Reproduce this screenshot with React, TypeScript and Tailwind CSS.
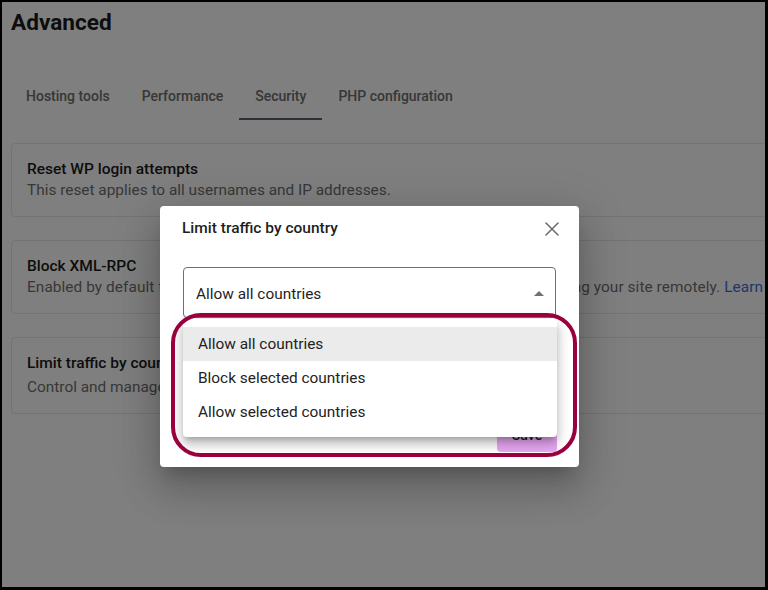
import React from "react";

const tabs = ["Hosting tools", "Performance", "Security", "PHP configuration"];

function Card({
  title,
  children,
  pt,
  pb,
  gap,
}: {
  title: string;
  children: React.ReactNode;
  pt: string;
  pb: string;
  gap: string;
}) {
  return (
    <div className={`w-[820px] border border-[#e6e6e6] rounded-[4px] px-[15px] ${pt} ${pb}`}>
      <div className="text-[15.5px] leading-[20px] font-medium text-[#1a1a1a]">{title}</div>
      <div className={`text-[15.4px] leading-[22px] text-[#6f6f6f] whitespace-nowrap ${gap}`}>{children}</div>
    </div>
  );
}

export default function App() {
  return (
    <div className="w-[768px] h-[590px] bg-black pt-[2px] pl-[2px] pr-[3px] pb-[3px] font-['Roboto','Liberation_Sans',sans-serif]">
      <div className="relative w-full h-full overflow-hidden bg-white">
        <h1 className="pl-[9px] pt-[8px] text-[22.6px] leading-[26px] font-bold text-[#1a1a1a]">Advanced</h1>

        <div className="mt-[36px] flex pl-[8px]">
          {tabs.map((t) => (
            <div
              key={t}
              className={`h-[48px] px-4 pt-[2px] flex items-center text-[14px] font-medium text-[#6e6e6e] border-b-2 ${
                t === "Security" ? "border-[#5a606e]" : "border-transparent"
              }`}
            >
              {t}
            </div>
          ))}
        </div>

        <div className="mt-[23px] pl-[9px] flex flex-col gap-[23px]">
          <Card title="Reset WP login attempts" pt="pt-[15px]" pb="pb-[15px]" gap="">
            This reset applies to all usernames and IP addresses.
          </Card>
          <Card title="Block XML-RPC" pt="pt-[15px]" pb="pb-[15px]" gap="tracking-[0.07px]">
            Enabled by default for all sites. XML-RPC is a protocol used by apps for accessing your site remotely.{" "}
            <span className="text-[#3a6fd6]">Learn more</span>
          </Card>
          <Card title="Limit traffic by country" pt="pt-[15px]" pb="pb-[15px]" gap="mt-[3px]">
            Control and manage traffic to your site by country.
          </Card>
        </div>

        <div className="absolute inset-0 bg-black/50" />

        <div className="absolute left-[158px] top-[204px] w-[419px] h-[261px] bg-white rounded-[4px] shadow-[0_11px_15px_-7px_rgba(0,0,0,0.2),0_24px_38px_3px_rgba(0,0,0,0.14),0_9px_46px_8px_rgba(0,0,0,0.12)]">
          <div className="flex items-start justify-between pl-[22px] pr-[20px] pt-[12px]">
            <div className="text-[15.5px] leading-[20px] font-medium text-[#1e1e1e]">Limit traffic by country</div>
            <svg width="14" height="14" viewBox="0 0 14 14" className="mt-[4px]">
              <path d="M1 1L13 13M13 1L1 13" stroke="#6a6a6a" strokeWidth="1.5" strokeLinecap="round" />
            </svg>
          </div>

          <div className="mx-[23px] mt-[29px] h-[51px] border border-[#6b7079] rounded-[4px] flex items-center justify-between pl-[12px] pr-[11px] pt-[5px]">
            <span className="text-[15.4px] text-[#1f1f1f]">Allow all countries</span>
            <svg width="10" height="5" viewBox="0 0 10 5" className="-mt-[4px]">
              <path d="M0 5L5 0L10 5Z" fill="#707070" />
            </svg>
          </div>

          <div className="flex justify-end pr-[22px] mt-[100px]">
            <div className="w-[60px] h-[34px] rounded-[4px] bg-[#e9a8f4] flex items-center justify-center text-[14px] font-medium text-[#1e1e1e]">
              Save
            </div>
          </div>

          <div className="absolute left-[23px] top-[113px] w-[374px] py-[8px] bg-white rounded-[4px] shadow-[0_5px_5px_-3px_rgba(0,0,0,0.2),0_8px_10px_1px_rgba(0,0,0,0.14),0_3px_14px_2px_rgba(0,0,0,0.12)]">
            {["Allow all countries", "Block selected countries", "Allow selected countries"].map((o, i) => (
              <div
                key={o}
                className={`h-[34px] flex items-center pl-[15px] pt-[2px] text-[15.4px] text-[#222222] ${i === 0 ? "bg-[#ebebeb]" : ""}`}
              >
                {o}
              </div>
            ))}
          </div>

          <div className="absolute left-[11px] top-[107px] w-[406px] h-[144px] border-[4px] border-[#99003d] rounded-[30px] pointer-events-none" />
        </div>
      </div>
    </div>
  );
}
